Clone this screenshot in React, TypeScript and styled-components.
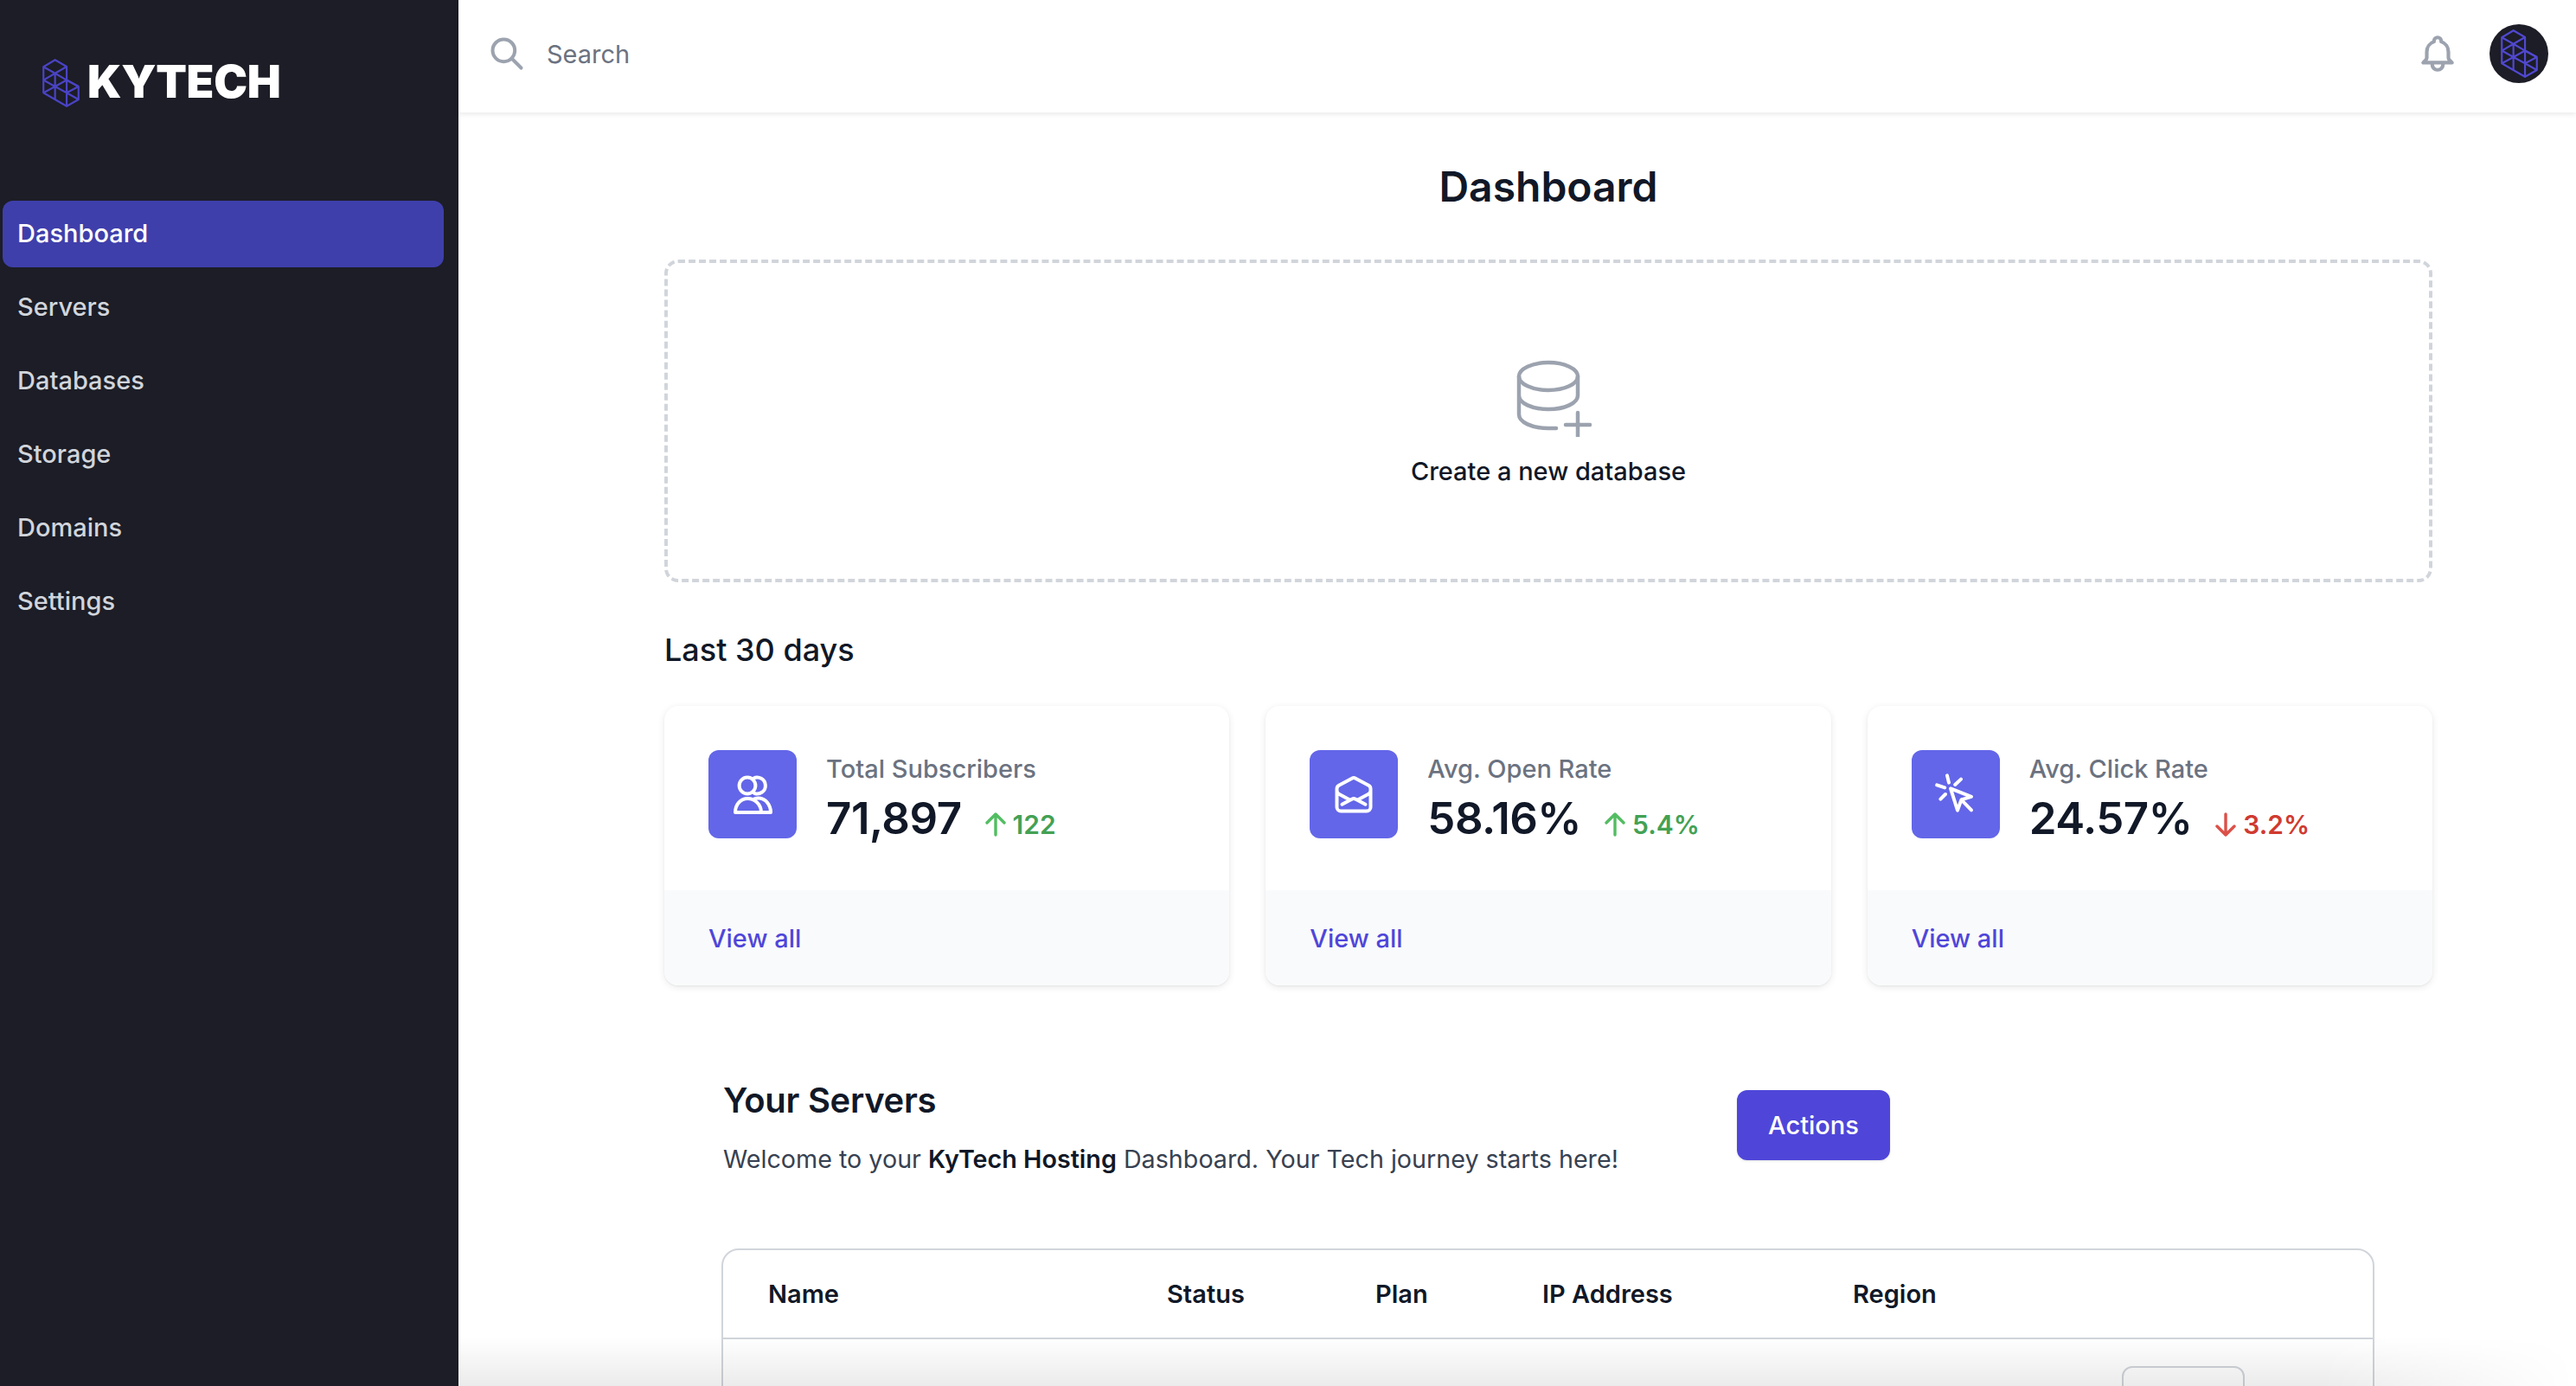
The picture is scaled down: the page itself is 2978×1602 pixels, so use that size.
import React from 'react';
import styled, { createGlobalStyle } from 'styled-components';

const GlobalStyle = createGlobalStyle`
  html, body {
    margin: 0;
    padding: 0;
    height: 100%;
    background: #fff;
    font-family: Inter, "Noto Sans", sans-serif;
    color: #111827;
  }
  * { box-sizing: border-box; }
`;

const Page = styled.div`
  position: relative;
  display: flex;
  width: 100vw;
  height: 100vh;
  overflow: hidden;
`;

const Sidebar = styled.aside`
  flex: 0 0 530px;
  background: #1c1d26;
  padding: 67px 17px 0 3px;
`;

const Logo = styled.div`
  display: flex;
  align-items: center;
  gap: 9px;
  height: 58px;
  margin: 0 0 107px 46px;
`;

const LogoText = styled.span`
  font-size: 52px;
  font-weight: 900;
  letter-spacing: -0.3px;
  color: #fff;
  line-height: 1;
  margin-top: -3px;
`;

const Nav = styled.nav`
  display: flex;
  flex-direction: column;
  gap: 8px;
`;

const NavItem = styled.a<{ $active?: boolean }>`
  display: flex;
  align-items: center;
  height: 77px;
  padding: 0 17px 2px;
  border-radius: 12px;
  font-size: 29px;
  font-weight: 500;
  color: ${({ $active }) => ($active ? '#fff' : '#d1d5db')};
  background: ${({ $active }) => ($active ? '#3f3fab' : 'transparent')};
`;

const Main = styled.main`
  flex: 1;
  min-width: 0;
  display: flex;
  flex-direction: column;
`;

const Topbar = styled.header`
  flex: 0 0 130px;
  display: flex;
  align-items: center;
  padding: 0 32px 6px 34px;
  background: #fff;
  box-shadow: 0 2px 6px rgba(0, 0, 0, 0.09);
`;

const SearchBox = styled.div`
  flex: 1;
  display: flex;
  align-items: center;
  gap: 24px;
  font-size: 29px;
  color: #6b7280;
`;

const TopActions = styled.div`
  display: flex;
  align-items: center;
  gap: 35px;
`;

const Avatar = styled.div`
  width: 68px;
  height: 68px;
  border-radius: 50%;
  background: #1c1d26;
  display: flex;
  align-items: center;
  justify-content: center;
`;

const Content = styled.div`
  padding: 0 166px 0 238px;
`;

const Title = styled.h1`
  margin: 56px 0 54px;
  font-size: 48px;
  line-height: 60px;
  font-weight: 600;
  text-align: center;
`;

const DropZone = styled.div`
  height: 373px;
  border: 4px dashed #d1d5db;
  border-radius: 16px;
  display: flex;
  flex-direction: column;
  align-items: center;
  padding-top: 111px;
  svg { margin-left: 9px; }
`;

const DropLabel = styled.span`
  margin-top: 20px;
  font-size: 29px;
  line-height: 40px;
  font-weight: 500;
`;

const SectionLabel = styled.h2`
  margin: 54px 0 41px;
  font-size: 36px;
  line-height: 48px;
  font-weight: 500;
`;

const Cards = styled.div`
  display: grid;
  grid-template-columns: repeat(3, 1fr);
  gap: 42px;
`;

const Card = styled.div`
  height: 323px;
  border-radius: 16px;
  overflow: hidden;
  display: flex;
  flex-direction: column;
  background: #fff;
  box-shadow: 0 2px 8px rgba(0, 0, 0, 0.09), 0 1px 2px rgba(0, 0, 0, 0.05);
`;

const CardBody = styled.div`
  flex: 1;
  display: flex;
  gap: 34px;
  padding: 51px;
`;

const IconBox = styled.div`
  flex: 0 0 102px;
  height: 102px;
  border-radius: 12px;
  background: #6366e8;
  display: flex;
  align-items: center;
  justify-content: center;
`;

const CardLabel = styled.div`
  margin-top: 2px;
  font-size: 29px;
  line-height: 40px;
  font-weight: 500;
  color: #6b7280;
`;

const ValueRow = styled.div`
  display: flex;
  align-items: baseline;
  margin-top: 7px;
`;

const Value = styled.span`
  font-size: 51px;
  line-height: 60px;
  font-weight: 600;
  letter-spacing: -0.5px;
`;

const Delta = styled.span<{ $down?: boolean }>`
  display: flex;
  align-items: baseline;
  margin-left: 27px;
  font-size: 30px;
  font-weight: 600;
  color: ${({ $down }) => ($down ? '#d03a2f' : '#43a154')};
  svg { align-self: center; margin-right: 8px; }
`;

const CardFooter = styled.div`
  flex: 0 0 110px;
  display: flex;
  align-items: center;
  padding: 0 51px;
  background: #f9fafb;
`;

const ViewAll = styled.a`
  font-size: 29px;
  font-weight: 500;
  color: #4f46d9;
`;

const ServersHead = styled.div`
  display: flex;
  justify-content: space-between;
  align-items: center;
  width: 1349px;
  margin: 107px 0 0 68px;
`;

const ServersTitle = styled.h2`
  margin: 0 0 22px;
  font-size: 40px;
  line-height: 52px;
  font-weight: 600;
  letter-spacing: -0.3px;
`;

const ServersText = styled.p`
  margin: 0;
  font-size: 28.7px;
  line-height: 40px;
  color: #374151;
  b { font-weight: 600; color: #111827; }
`;

const ActionsButton = styled.button`
  width: 177px;
  height: 81px;
  margin-bottom: 6px;
  border: 0;
  border-radius: 12px;
  background: #4f46d9;
  color: #fff;
  font: 500 29px Inter, sans-serif;
  box-shadow: 0 1px 3px rgba(0, 0, 0, 0.12);
`;

const Table = styled.div`
  width: 1911px;
  margin: 83px 0 0 66px;
  border: 2px solid #d1d5db;
  border-radius: 20px;
`;

const TableHead = styled.div`
  display: grid;
  grid-template-columns: 461px 241px 193px 359px 1fr;
  align-items: center;
  height: 103px;
  padding-left: 52px;
  font-size: 29px;
  font-weight: 600;
  border-bottom: 2px solid #d1d5db;
`;

const TableRow = styled.div`
  display: flex;
  justify-content: flex-end;
  padding: 31px 148px 31px 0;
`;

const RowButton = styled.div`
  width: 142px;
  height: 80px;
  border: 2px solid #d1d5db;
  border-radius: 12px;
`;

// bottom edge of the window, lies over the page
const BottomFade = styled.div`
  position: absolute;
  left: 530px;
  right: 0;
  bottom: 0;
  height: 57px;
  pointer-events: none;
  background: linear-gradient(to bottom, rgba(0, 0, 0, 0), rgba(0, 0, 0, 0.08));
  mask-image: linear-gradient(to right, #000 88%, transparent);
`;

const LogoMark = ({ color = '#4a43c4' }: { color?: string }) => (
  <svg width="43" height="58" viewBox="-4 -4 138 180" fill="none" stroke={color} strokeWidth="7" strokeLinejoin="round">
    <path d="M43 0L86 25V75L130 99V147L86 172L0 122V26Z" />
    <path d="M0 26L43 50L86 25M43 50V147M0 75L43 50L86 75L130 99M0 75L43 99L86 122L130 147M0 122L43 99L86 75V172M86 122L130 99" />
  </svg>
);

const SearchIcon = () => (
  <svg width="44" height="44" viewBox="0 0 24 24" fill="none" stroke="#9ca3af" strokeWidth="2.2" strokeLinecap="round" strokeLinejoin="round">
    <path d="M21 21l-6-6m2-5a7 7 0 11-14 0 7 7 0 0114 0z" />
  </svg>
);

const BellIcon = () => (
  <svg width="50" height="50" viewBox="0 0 24 24" fill="none" stroke="#9ca3af" strokeWidth="2" strokeLinecap="round" strokeLinejoin="round">
    <path d="M15 17h5l-1.405-1.405A2.032 2.032 0 0118 14.158V11a6.002 6.002 0 00-4-5.659V5a2 2 0 10-4 0v.341C7.67 6.165 6 8.388 6 11v3.159c0 .538-.214 1.055-.595 1.436L4 17h5m6 0v1a3 3 0 11-6 0v-1m6 0H9" />
  </svg>
);

const DatabaseIcon = () => (
  <svg width="90" height="90" viewBox="0 0 90 90" fill="none" stroke="#9ca3af" strokeWidth="4.5" strokeLinecap="round" strokeLinejoin="round">
    <ellipse cx="40" cy="20" rx="34" ry="16" />
    <path d="M6 20V64C6 73 21 80 40 80H49M74 20V42M6 42C6 51 21 58 40 58S74 51 74 42M74 62V90M60 76H88" />
  </svg>
);

const UsersIcon = () => (
  <svg width="48" height="48" viewBox="0 0 24 24" fill="none" stroke="#fff" strokeWidth="2" strokeLinecap="round" strokeLinejoin="round">
    <circle cx="9" cy="7" r="4.7" />
    <path d="M12.5 2.9A4.7 4.7 0 1 1 13 11.4" />
    <path d="M2 22.5C2 18 5 14.5 9.2 14.5S17 18 17 22.5Z" />
    <path d="M13 14.7C14.5 14.2 15.5 14.2 16 14.3C19.8 14.8 22.5 18.2 22.5 22.5H17" />
  </svg>
);

const MailOpenIcon = () => (
  <svg width="48" height="48" viewBox="0 0 24 24" fill="none" stroke="#fff" strokeWidth="2" strokeLinecap="round" strokeLinejoin="round">
    <path d="M21.75 9v.906a2.25 2.25 0 01-1.183 1.981l-6.478 3.488M2.25 9v.906a2.25 2.25 0 001.183 1.981l6.478 3.488m8.839 2.51l-4.66-2.51m0 0l-1.023-.55a2.25 2.25 0 00-2.134 0l-1.022.55m0 0l-4.661 2.51m16.5 1.615a2.25 2.25 0 01-2.25 2.25h-15a2.25 2.25 0 01-2.25-2.25V8.844a2.25 2.25 0 011.183-1.98l7.5-4.04a2.25 2.25 0 012.134 0l7.5 4.04a2.25 2.25 0 011.183 1.98V18z" />
  </svg>
);

const CursorIcon = () => (
  <svg width="48" height="48" viewBox="0 0 24 24" fill="none" stroke="#fff" strokeWidth="2" strokeLinecap="round" strokeLinejoin="round">
    <path d="M9 8.7L21 13.4L15.2 15.2L13 21.3ZM15.2 15.2L21 21.2" />
    <path d="M7 1.2L8 5.3M15 3.3L11.6 6.5M1.1 6.7L5.6 8.2M6 12L3.2 14.8" />
  </svg>
);

const ArrowIcon = ({ down }: { down?: boolean }) => (
  <svg width="24" height="28" viewBox="0 0 24 28" fill="none" stroke={down ? '#dc5048' : '#52bd62'} strokeWidth="3.4" strokeLinecap="round" strokeLinejoin="round">
    {down ? <path d="M12 2V26M2 16L12 26L22 16" /> : <path d="M12 26V2M2 12L12 2L22 12" />}
  </svg>
);

const navItems = ['Dashboard', 'Servers', 'Databases', 'Storage', 'Domains', 'Settings'];

const stats = [
  { label: 'Total Subscribers', value: '71,897', delta: '122', icon: <UsersIcon /> },
  { label: 'Avg. Open Rate', value: '58.16%', delta: '5.4%', icon: <MailOpenIcon /> },
  { label: 'Avg. Click Rate', value: '24.57%', delta: '3.2%', down: true, icon: <CursorIcon /> },
];

const App: React.FC = () => (
  <>
    <GlobalStyle />
    <Page>
      <Sidebar>
        <Logo>
          <LogoMark />
          <LogoText>KYTECH</LogoText>
        </Logo>
        <Nav>
          {navItems.map((item, i) => (
            <NavItem key={item} $active={i === 0}>{item}</NavItem>
          ))}
        </Nav>
      </Sidebar>
      <Main>
        <Topbar>
          <SearchBox>
            <SearchIcon />
            Search
          </SearchBox>
          <TopActions>
            <BellIcon />
            <Avatar><LogoMark color="#5048d0" /></Avatar>
          </TopActions>
        </Topbar>
        <Content>
          <Title>Dashboard</Title>
          <DropZone>
            <DatabaseIcon />
            <DropLabel>Create a new database</DropLabel>
          </DropZone>
          <SectionLabel>Last 30 days</SectionLabel>
          <Cards>
            {stats.map(s => (
              <Card key={s.label}>
                <CardBody>
                  <IconBox>{s.icon}</IconBox>
                  <div>
                    <CardLabel>{s.label}</CardLabel>
                    <ValueRow>
                      <Value>{s.value}</Value>
                      <Delta $down={s.down}>
                        <ArrowIcon down={s.down} />
                        {s.delta}
                      </Delta>
                    </ValueRow>
                  </div>
                </CardBody>
                <CardFooter><ViewAll>View all</ViewAll></CardFooter>
              </Card>
            ))}
          </Cards>
          <ServersHead>
            <div>
              <ServersTitle>Your Servers</ServersTitle>
              <ServersText>Welcome to your <b>KyTech Hosting</b> Dashboard. Your Tech journey starts here!</ServersText>
            </div>
            <ActionsButton>Actions</ActionsButton>
          </ServersHead>
          <Table>
            <TableHead>
              <span>Name</span>
              <span>Status</span>
              <span>Plan</span>
              <span>IP Address</span>
              <span>Region</span>
            </TableHead>
            <TableRow><RowButton /></TableRow>
          </Table>
        </Content>
      </Main>
      <BottomFade />
    </Page>
  </>
);

export default App;
